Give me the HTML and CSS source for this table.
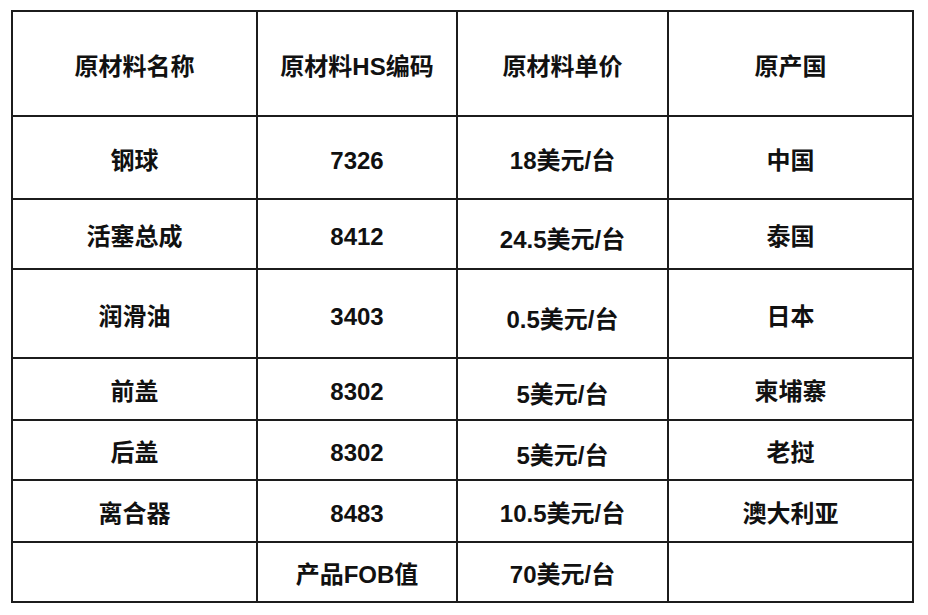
FILE: index.html
```html
<!DOCTYPE html>
<html lang="zh">
<head>
<meta charset="utf-8">
<link rel="stylesheet" href="styles.css">
</head>
<body>
<table class="grid">
  <colgroup>
    <col class="c1"><col class="c2"><col class="c3"><col class="c4">
  </colgroup>
  <tr class="r-head"><td>原材料名称</td><td>原材料HS编码</td><td>原材料单价</td><td>原产国</td></tr>
  <tr class="r2"><td>钢球</td><td>7326</td><td>18美元/台</td><td>中国</td></tr>
  <tr class="r3"><td>活塞总成</td><td>8412</td><td class="low">24.5美元/台</td><td>泰国</td></tr>
  <tr class="r4"><td>润滑油</td><td>3403</td><td class="low">0.5美元/台</td><td>日本</td></tr>
  <tr class="r5"><td>前盖</td><td>8302</td><td class="low">5美元/台</td><td>柬埔寨</td></tr>
  <tr class="r6"><td>后盖</td><td>8302</td><td class="low">5美元/台</td><td>老挝</td></tr>
  <tr class="r7"><td>离合器</td><td>8483</td><td>10.5美元/台</td><td>澳大利亚</td></tr>
  <tr class="r8"><td></td><td>产品FOB值</td><td>70美元/台</td><td></td></tr>
</table>
</body>
</html>
```
FILE: styles.css
```css
html, body {
  margin: 0;
  padding: 0;
  background: #ffffff;
}
body {
  font-family: "Liberation Sans", "Noto Sans CJK SC", sans-serif;
  font-weight: bold;
  color: #111111;
}
.grid {
  border-collapse: collapse;
  table-layout: fixed;
  margin: 10px 0 0 11px;
  width: 903px;
}
.c1 { width: 245px; }
.c2 { width: 200px; }
.c3 { width: 211px; }
.c4 { width: 245px; }
.grid td {
  border: 2px solid #1c1c1c;
  text-align: center;
  vertical-align: middle;
  font-size: 24px;
  padding: 6px 0 0 0;
  line-height: 1;
  box-sizing: border-box;
}
.grid td.low { padding-top: 12px; }
.r-head td { height: 105px; }
.r2 td { height: 83px; }
.r3 td { height: 70px; }
.r4 td { height: 89px; }
.r5 td { height: 62px; }
.r6 td { height: 60px; }
.r7 td { height: 62px; }
.r8 td { height: 60px; }
```
